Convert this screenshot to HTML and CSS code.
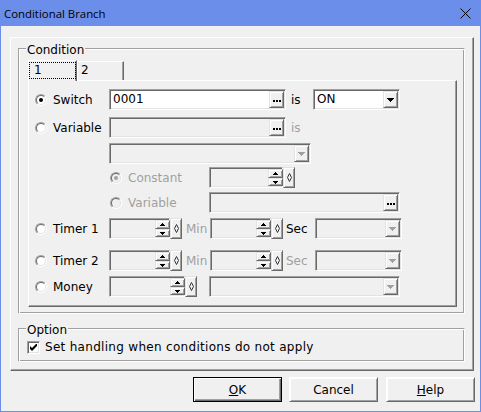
FILE: index.html
```html
<!DOCTYPE html>
<html>
<head>
<meta charset="utf-8">
<title>Conditional Branch</title>
<link rel="stylesheet" href="styles.css">
</head>
<body>
<div class="window">
  <div class="titlebar">
    <span class="title">Conditional Branch</span>
    <svg class="close" width="11" height="11" viewBox="0 0 11 11"><path d="M0.5 0.5L10.5 10.5M10.5 0.5L0.5 10.5" stroke="#000" stroke-width="1" fill="none"/></svg>
  </div>
  <div class="client">
    <div class="frame">
      <div class="group cond">
        <span class="legend">Condition</span>
        <div class="tabs">
          <div class="tab sel"><span class="focus">1</span></div>
          <div class="tab other">2</div>
        </div>
        <div class="panel">
          <div class="row">
            <div class="rl"><span class="radio on"><i></i></span>Switch</div>
            <div class="field w177"><span class="val">0001</span><span class="mb"><svg class="dots" width="8" height="2" viewBox="0 0 8 2"><path d="M0 0h2v2h-2zM3 0h2v2h-2zM6 0h2v2h-2z"/></svg></span></div>
            <span class="lbl is">is</span>
            <div class="field w87"><span class="val">ON</span><span class="mb"><svg class="arr" width="7" height="4" viewBox="0 0 7 4"><path d="M0 0h7v1h-1v1h-1v1h-1v1h-1v-1h-1v-1h-1v-1h-1z"/></svg></span></div>
          </div>
          <div class="row g7">
            <div class="rl"><span class="radio"><i></i></span>Variable</div>
            <div class="field w177 dis"><span class="val"></span><span class="mb"><svg class="dots" width="8" height="2" viewBox="0 0 8 2"><path d="M0 0h2v2h-2zM3 0h2v2h-2zM6 0h2v2h-2z"/></svg></span></div>
            <span class="lbl is off">is</span>
          </div>
          <div class="row g5">
            <span class="ind"></span>
            <div class="field w202 dis"><span class="val"></span><span class="mb"><svg class="arr gray" width="7" height="4" viewBox="0 0 7 4"><path d="M0 0h7v1h-1v1h-1v1h-1v1h-1v-1h-1v-1h-1v-1h-1z"/></svg></span></div>
          </div>
          <div class="row g3">
            <div class="rl sub off"><span class="radio on dis"><i></i></span>Constant</div>
            <div class="spin">
              <div class="field w74 dis"><span class="val"></span><span class="ud"><span class="mb up"><svg width="5" height="3" viewBox="0 0 5 3"><path d="M2 0h1v1h1v1h1v1h-5v-1h1v-1h1z"/></svg></span><span class="mb dn"><svg width="5" height="3" viewBox="0 0 5 3"><path d="M0 0h5v1h-1v1h-1v1h-1v-1h-1v-1h-1z"/></svg></span></span></div>
              <span class="dia"><svg width="5" height="9" viewBox="0 0 5 9"><path d="M2.5 0.5L4.5 4.5L2.5 8.5L0.5 4.5Z" fill="none" stroke="#333" stroke-width="1"/></svg></span>
            </div>
          </div>
          <div class="row g4">
            <div class="rl sub off"><span class="radio dis"><i></i></span>Variable</div>
            <div class="field w191 dis"><span class="val"></span><span class="mb"><svg class="dots" width="8" height="2" viewBox="0 0 8 2"><path d="M0 0h2v2h-2zM3 0h2v2h-2zM6 0h2v2h-2z"/></svg></span></div>
          </div>
          <div class="row g5">
            <div class="rl"><span class="radio"><i></i></span>Timer 1</div>
            <div class="spin">
              <div class="field w61 dis"><span class="val"></span><span class="ud"><span class="mb up"><svg width="5" height="3" viewBox="0 0 5 3"><path d="M2 0h1v1h1v1h1v1h-5v-1h1v-1h1z"/></svg></span><span class="mb dn"><svg width="5" height="3" viewBox="0 0 5 3"><path d="M0 0h5v1h-1v1h-1v1h-1v-1h-1v-1h-1z"/></svg></span></span></div>
              <span class="dia"><svg width="5" height="9" viewBox="0 0 5 9"><path d="M2.5 0.5L4.5 4.5L2.5 8.5L0.5 4.5Z" fill="none" stroke="#333" stroke-width="1"/></svg></span>
            </div>
            <span class="lbl min off">Min</span>
            <div class="spin">
              <div class="field w61 dis"><span class="val"></span><span class="ud"><span class="mb up"><svg width="5" height="3" viewBox="0 0 5 3"><path d="M2 0h1v1h1v1h1v1h-5v-1h1v-1h1z"/></svg></span><span class="mb dn"><svg width="5" height="3" viewBox="0 0 5 3"><path d="M0 0h5v1h-1v1h-1v1h-1v-1h-1v-1h-1z"/></svg></span></span></div>
              <span class="dia"><svg width="5" height="9" viewBox="0 0 5 9"><path d="M2.5 0.5L4.5 4.5L2.5 8.5L0.5 4.5Z" fill="none" stroke="#333" stroke-width="1"/></svg></span>
            </div>
            <span class="lbl sec">Sec</span>
            <div class="field w87 dis"><span class="val"></span><span class="mb"><svg class="arr gray" width="7" height="4" viewBox="0 0 7 4"><path d="M0 0h7v1h-1v1h-1v1h-1v1h-1v-1h-1v-1h-1v-1h-1z"/></svg></span></div>
          </div>
          <div class="row g11">
            <div class="rl"><span class="radio"><i></i></span>Timer 2</div>
            <div class="spin">
              <div class="field w61 dis"><span class="val"></span><span class="ud"><span class="mb up"><svg width="5" height="3" viewBox="0 0 5 3"><path d="M2 0h1v1h1v1h1v1h-5v-1h1v-1h1z"/></svg></span><span class="mb dn"><svg width="5" height="3" viewBox="0 0 5 3"><path d="M0 0h5v1h-1v1h-1v1h-1v-1h-1v-1h-1z"/></svg></span></span></div>
              <span class="dia"><svg width="5" height="9" viewBox="0 0 5 9"><path d="M2.5 0.5L4.5 4.5L2.5 8.5L0.5 4.5Z" fill="none" stroke="#333" stroke-width="1"/></svg></span>
            </div>
            <span class="lbl min off">Min</span>
            <div class="spin">
              <div class="field w61 dis"><span class="val"></span><span class="ud"><span class="mb up"><svg width="5" height="3" viewBox="0 0 5 3"><path d="M2 0h1v1h1v1h1v1h-5v-1h1v-1h1z"/></svg></span><span class="mb dn"><svg width="5" height="3" viewBox="0 0 5 3"><path d="M0 0h5v1h-1v1h-1v1h-1v-1h-1v-1h-1z"/></svg></span></span></div>
              <span class="dia"><svg width="5" height="9" viewBox="0 0 5 9"><path d="M2.5 0.5L4.5 4.5L2.5 8.5L0.5 4.5Z" fill="none" stroke="#333" stroke-width="1"/></svg></span>
            </div>
            <span class="lbl sec off">Sec</span>
            <div class="field w87 dis"><span class="val"></span><span class="mb"><svg class="arr gray" width="7" height="4" viewBox="0 0 7 4"><path d="M0 0h7v1h-1v1h-1v1h-1v1h-1v-1h-1v-1h-1v-1h-1z"/></svg></span></div>
          </div>
          <div class="row g5">
            <div class="rl"><span class="radio"><i></i></span>Money</div>
            <div class="spin">
              <div class="field w76 dis"><span class="val"></span><span class="ud"><span class="mb up"><svg width="5" height="3" viewBox="0 0 5 3"><path d="M2 0h1v1h1v1h1v1h-5v-1h1v-1h1z"/></svg></span><span class="mb dn"><svg width="5" height="3" viewBox="0 0 5 3"><path d="M0 0h5v1h-1v1h-1v1h-1v-1h-1v-1h-1z"/></svg></span></span></div>
              <span class="dia"><svg width="5" height="9" viewBox="0 0 5 9"><path d="M2.5 0.5L4.5 4.5L2.5 8.5L0.5 4.5Z" fill="none" stroke="#333" stroke-width="1"/></svg></span>
            </div>
            <div class="field w191 dis ml12"><span class="val"></span><span class="mb"><svg class="arr gray" width="7" height="4" viewBox="0 0 7 4"><path d="M0 0h7v1h-1v1h-1v1h-1v1h-1v-1h-1v-1h-1v-1h-1z"/></svg></span></div>
          </div>
        </div>
      </div>
      <div class="group opt">
        <span class="legend">Option</span>
        <div class="check"><span class="cb"><svg width="7" height="7" viewBox="0 0 7 7"><path d="M0 2L2 4L6 0L7 0L7 2L2 7L0 5Z"/></svg></span><span class="ctext">Set handling when conditions do not apply</span></div>
      </div>
    </div>
    <div class="buttons">
      <div class="btn def"><span class="bt"><u>O</u>K</span></div>
      <div class="btn b2"><span class="bt">Cancel</span></div>
      <div class="btn b3"><span class="bt"><u>H</u>elp</span></div>
    </div>
  </div>
</div>
</body>
</html>
```
FILE: styles.css
```css
* { box-sizing: border-box; }
html, body { margin: 0; padding: 0; }
body {
  width: 481px;
  height: 412px;
  overflow: hidden;
  font-family: "DejaVu Sans", sans-serif;
  font-size: 12px;
  color: #000;
  background: #f0f0f0;
}
.window {
  width: 481px;
  height: 412px;
  background: #6b8eeb;
  padding: 0 1px 1px;
  display: flex;
  flex-direction: column;
}
.titlebar {
  height: 26px;
  flex: none;
  display: flex;
  align-items: center;
  padding-left: 3px;
}
.title {
  font-family: "Open Sans", sans-serif;
  font-size: 11.4px;
  color: #000;
}
.close { margin-left: auto; margin-right: 9px; display: block; }
.client {
  flex: 1;
  background: #f0f0f0;
  padding: 11px 0 0 9px;
}
.frame {
  width: 464px;
  height: 334px;
  border: 1px solid;
  border-color: #fff #696969 #696969 #fff;
  box-shadow: inset -1px -1px #a0a0a0;
  padding: 10px 8px 8px 7px;
}
.group {
  position: relative;
  width: 447px;
  border: 1px solid;
  border-color: #a0a0a0 #fff #fff #a0a0a0;
  box-shadow: inset 1px 1px #fff, inset -1px -1px #a0a0a0;
}
.cond { height: 266px; padding: 11px 0 0 9px; }
.opt { height: 34px; margin-top: 14px; padding: 10px 0 0 8px; }
.legend {
  position: absolute;
  left: 7px;
  top: -6px;
  background: #f0f0f0;
  padding: 0 1px;
  line-height: 14px;
}
.tabs { display: flex; align-items: flex-end; height: 20px; }
.tab {
  background: #f0f0f0;
  border-top: 1px solid #fff;
  border-left: 1px solid #fff;
  border-right: 1px solid #696969;
  box-shadow: inset -1px 0 #a0a0a0;
}
.tab.sel {
  width: 49px;
  height: 21px;
  margin-bottom: -1px;
  position: relative;
  z-index: 1;
  padding-top: 1px;
}
.focus {
  display: block;
  width: 47px;
  height: 17px;
  border: 1px dotted #000;
  padding-left: 4px;
  line-height: 15px;
}
.tab.other {
  width: 47px;
  height: 19px;
  padding: 1px 0 0 3px;
  line-height: 14px;
}
.panel {
  width: 429px;
  height: 227px;
  border: 1px solid;
  border-color: #fff #696969 #696969 #fff;
  box-shadow: inset -1px -1px #a0a0a0;
  padding: 8px 0 0 6px;
}
.row { display: flex; align-items: center; height: 21px; }
.g3 { margin-top: 3px; }
.g4 { margin-top: 4px; }
.g5 { margin-top: 5px; }
.g7 { margin-top: 7px; }
.g11 { margin-top: 11px; }
.rl { display: flex; align-items: center; width: 74px; flex: none; }
.rl.sub { margin-left: 75px; width: 99px; }
.ind { width: 74px; flex: none; }
.off { color: #a0a0a0; }
.radio {
  width: 12px;
  height: 12px;
  border-radius: 50%;
  border: 1px solid;
  border-color: #a0a0a0 #fff #fff #a0a0a0;
  margin-right: 6px;
  flex: none;
}
.radio i {
  display: flex;
  align-items: center;
  justify-content: center;
  width: 10px;
  height: 10px;
  border-radius: 50%;
  border: 1px solid;
  border-color: #696969 #e3e3e3 #e3e3e3 #696969;
  background: #fff;
}
.radio.on i::after {
  content: "";
  width: 4px;
  height: 4px;
  border-radius: 50%;
  background: #000;
}
.radio.dis i { background: #f0f0f0; }
.radio.dis.on i::after { background: #a0a0a0; }
.field {
  height: 21px;
  display: flex;
  align-items: stretch;
  border: 1px solid;
  border-color: #a0a0a0 #fff #fff #a0a0a0;
  box-shadow: inset 1px 1px #696969, inset -1px -1px #e3e3e3;
  background: #fff;
  padding: 1px;
  flex: none;
}
.field.dis { background: #f0f0f0; }
.w61 { width: 61px; }
.w74 { width: 74px; }
.w76 { width: 76px; }
.w87 { width: 87px; }
.w177 { width: 177px; }
.w191 { width: 191px; }
.w202 { width: 202px; }
.ml12 { margin-left: 12px; }
.val { flex: 1; padding: 1px 0 0 2px; line-height: 15px; }
.mb {
  width: 15px;
  flex: none;
  display: flex;
  align-items: center;
  justify-content: center;
  background: #f0f0f0;
  border: 1px solid;
  border-color: #e3e3e3 #696969 #696969 #e3e3e3;
  box-shadow: inset 1px 1px #fff, inset -1px -1px #a0a0a0;
}
.mb svg { display: block; fill: #000; }
.dots { margin-top: 3px; }
.arr { margin-top: 1px; }
.mb svg.gray { fill: #a0a0a0; }
.spin { display: flex; flex: none; }
.ud {
  display: flex;
  flex-direction: column;
  width: 15px;
  flex: none;
  margin-right: -2px;
}
.ud .mb.up { height: 9px; }
.ud .mb.dn { height: 8px; }
.dia {
  width: 12px;
  height: 21px;
  flex: none;
  display: flex;
  align-items: center;
  justify-content: center;
  border: 1px solid;
  border-color: #e3e3e3 #696969 #696969 #e3e3e3;
  box-shadow: inset 1px 1px #fff, inset -1px -1px #a0a0a0;
  background: #f0f0f0;
}
.dia svg { display: block; }
.lbl { flex: none; }
.is { width: 27px; padding-left: 5px; }
.min { width: 28px; padding-left: 4px; }
.sec { width: 32px; padding-left: 3px; }
.check { display: flex; align-items: center; height: 16px; }
.ctext { letter-spacing: 0.3px; }
.cb {
  width: 13px;
  height: 13px;
  flex: none;
  border: 1px solid;
  border-color: #a0a0a0 #fff #fff #a0a0a0;
  box-shadow: inset 1px 1px #696969, inset -1px -1px #e3e3e3;
  background: #fff;
  margin-right: 5px;
  display: flex;
  align-items: center;
  justify-content: center;
}
.cb svg { display: block; fill: #000; }
.buttons {
  display: flex;
  justify-content: flex-end;
  margin-top: 6px;
  padding-right: 5px;
}
.btn {
  width: 89px;
  height: 25px;
  display: flex;
  align-items: center;
  justify-content: center;
  background: #f0f0f0;
  border: 1px solid;
  border-color: #fff #696969 #696969 #fff;
  box-shadow: inset 1px 1px #fff, inset -1px -1px #a0a0a0;
}
.btn.def {
  border-color: #000;
  box-shadow: inset 1px 1px #fff, inset -1px -1px #696969, inset -2px -2px #a0a0a0;
}
.b2 { margin-left: 7px; }
.b3 { margin-left: 8px; }
.bt { line-height: 14px; }
```
